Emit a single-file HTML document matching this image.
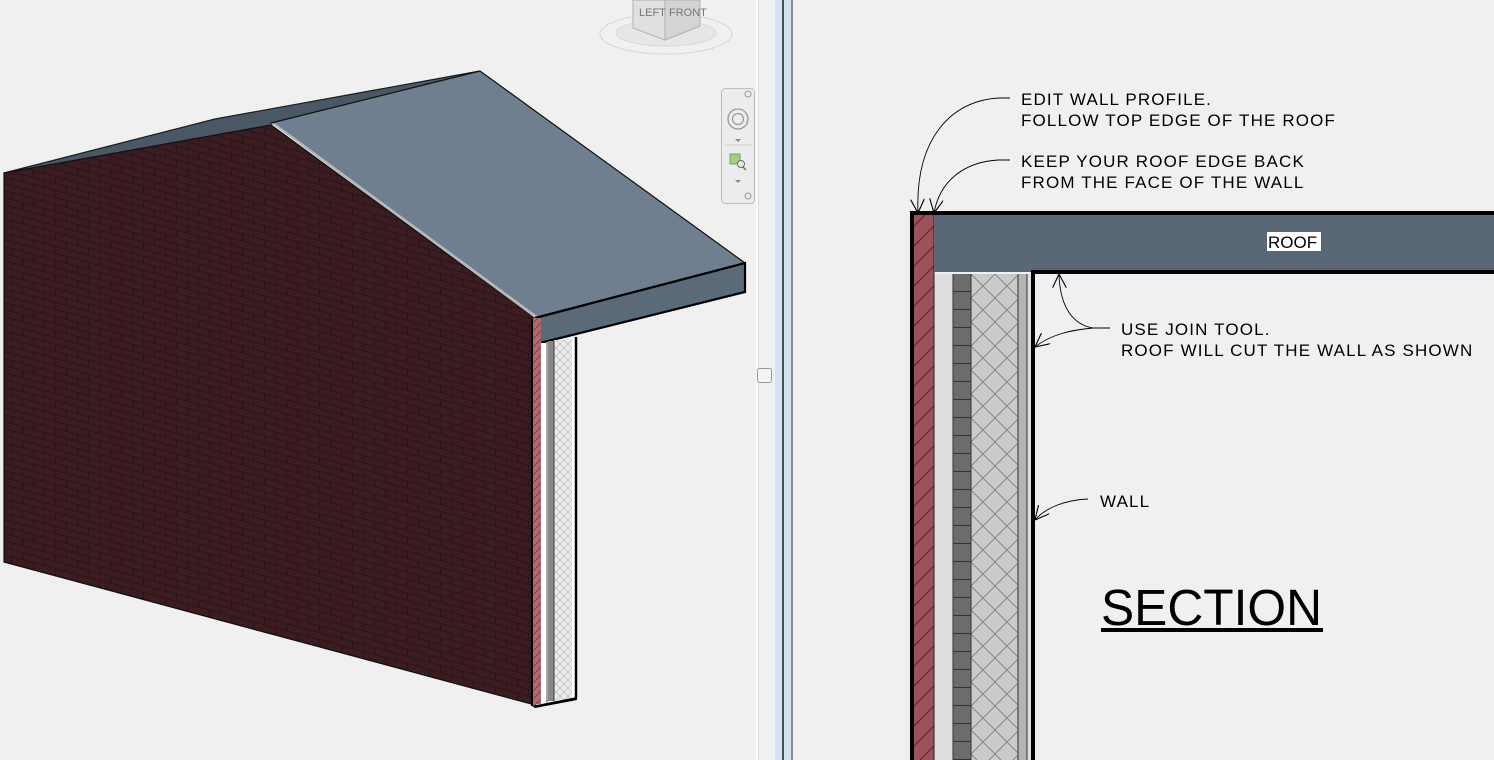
<!DOCTYPE html>
<html><head><meta charset="utf-8"><style>
html,body{margin:0;padding:0;background:#f0f0f0;width:1494px;height:760px;overflow:hidden}
svg{display:block}
text{font-family:"Liberation Sans",Arial,sans-serif}
</style></head><body>
<svg width="1494" height="760" viewBox="0 0 1494 760" xmlns="http://www.w3.org/2000/svg">
<defs>
<pattern id="brick" width="22" height="14" patternUnits="userSpaceOnUse" patternTransform="skewY(15.1)">
<rect width="22" height="14" fill="#3b1c21"/>
<path d="M0 0.5H22M0 7.5H22M0.5 0V7M11.5 7V14" stroke="#2c1316" stroke-width="1"/>
</pattern>
<pattern id="hatchR" width="20" height="20" patternUnits="userSpaceOnUse">
<rect width="20" height="20" fill="#9c525a"/>
<path d="M0 20L20 0M-5 5L5 -5M15 25L25 15" stroke="#5a1e25" stroke-width="1"/>
</pattern>
<pattern id="hatchR2" width="8" height="8" patternUnits="userSpaceOnUse">
<rect width="8" height="8" fill="#b06a70"/>
<path d="M0 8L8 0" stroke="#8a4048" stroke-width="1"/>
</pattern>
<pattern id="cross" width="24" height="24" patternUnits="userSpaceOnUse" x="971" y="274">
<rect width="24" height="24" fill="#cacaca"/>
<path d="M0 0L24 24M24 0L0 24" stroke="#7a7a7a" stroke-width="0.8"/>
</pattern>
<pattern id="cross2" width="8" height="8" patternUnits="userSpaceOnUse">
<rect width="8" height="8" fill="#ececec"/>
<path d="M0 0L8 8M8 0L0 8" stroke="#b8b8b8" stroke-width="0.7"/>
</pattern>
<pattern id="blocks" width="20" height="18" patternUnits="userSpaceOnUse" x="953" y="274">
<rect width="20" height="18" fill="#6c6c6c"/>
<path d="M0 17.5H20" stroke="#333" stroke-width="1"/>
</pattern>
<marker id="ar" viewBox="0 0 10 10" refX="10" refY="5" markerWidth="14" markerHeight="14" orient="auto-start-reverse" markerUnits="userSpaceOnUse">
<path d="M0 0L10 5L0 10" fill="none" stroke="#000" stroke-width="0.8"/>
</marker>
</defs>

<polygon points="4,173 215,119 480,71 271,125 " fill="#4a5866"/>
<polyline points="4,173 215,119 480,71" fill="none" stroke="#1a1a1a" stroke-width="1.2"/>
<polygon points="4,173 271,125 535,318 535,705 4,562" fill="url(#brick)"/>
<polygon points="4,173 271,125 535,318 535,705 4,562" fill="none" stroke="#111" stroke-width="1.2"/>
<polygon points="271,123 480,71 745,263 535,318" fill="#6f7f8f"/>
<polygon points="271,123 535,318 540,318 276,124" fill="#b8b8b8"/>
<polyline points="271,123 480,71 745,263" fill="none" stroke="#111" stroke-width="1.2"/>
<polygon points="535,318 745,263 745,292 540,343 535,343" fill="#5b6a78"/>
<polyline points="535,318 745,263 745,292 540,343" fill="none" stroke="#000" stroke-width="2.2"/>
<polygon points="532,318 541,318 541,704 532,705" fill="url(#hatchR2)"/>
<line x1="532" y1="318" x2="532" y2="706" stroke="#000" stroke-width="2"/>
<rect x="541" y="343" width="7" height="360" fill="#fff"/>
<rect x="548" y="341" width="6" height="360" fill="#888"/>
<rect x="554" y="340" width="18" height="360" fill="url(#cross2)"/>
<rect x="572" y="338" width="3" height="360" fill="#fff"/>
<line x1="576" y1="337" x2="576" y2="698" stroke="#000" stroke-width="2.5"/>
<polygon points="532,706 577,697 577,700 535,708" fill="#000"/>
<line x1="547" y1="343" x2="547" y2="703" stroke="#222" stroke-width="0.8"/>
<line x1="554" y1="341" x2="554" y2="702" stroke="#222" stroke-width="0.8"/>

<ellipse cx="666" cy="34" rx="66" ry="20" fill="none" stroke="#c8c8c8" stroke-width="1" stroke-dasharray="2 1"/>
<ellipse cx="666" cy="33" rx="50" ry="13" fill="#e6e6e6" stroke="#d6d6d6"/>
<polygon points="633,0 665,0 665,40 633,28" fill="#e0e0e0" stroke="#b0b0b0"/>
<polygon points="665,0 700,0 700,26 665,40" fill="#d4d4d4" stroke="#b0b0b0"/>
<text x="639" y="16" font-size="11" fill="#777">LEFT</text>
<text x="669" y="16" font-size="11" fill="#777">FRONT</text>

<rect x="721.5" y="88.5" width="33" height="115" rx="4" fill="#ececec" stroke="#bdbdbd"/>
<circle cx="748" cy="94" r="3" fill="none" stroke="#999"/>
<circle cx="738" cy="119" r="10" fill="none" stroke="#999" stroke-width="1.3"/>
<circle cx="738" cy="119" r="5.5" fill="none" stroke="#999" stroke-width="1.2"/>
<path d="M735 139L741 139L738 142Z" fill="#888"/>
<line x1="725" y1="145" x2="752" y2="145" stroke="#ccc"/>
<rect x="730" y="154" width="10" height="10" fill="#a6cc8a" stroke="#7aa060"/>
<circle cx="741" cy="164" r="3.5" fill="#eee" stroke="#666"/>
<line x1="743" y1="167" x2="746" y2="170" stroke="#666" stroke-width="1.3"/>
<path d="M735 180L741 180L738 183Z" fill="#888"/>
<circle cx="748" cy="196" r="3" fill="none" stroke="#999"/>

<rect x="756" y="0" width="2" height="760" fill="#fafafa"/>
<line x1="758.5" y1="0" x2="758.5" y2="760" stroke="#e0e0e0"/>
<rect x="757.5" y="368.5" width="14" height="14" rx="2" fill="#f4f4f4" stroke="#999"/>
<rect x="775" y="0" width="7" height="760" fill="#d4e3f1"/>
<rect x="782" y="0" width="2" height="760" fill="#505050"/>
<rect x="784" y="0" width="7" height="760" fill="#d4e3f1"/>
<rect x="791" y="0" width="2" height="760" fill="#8a8a8a"/>

<rect x="934" y="274" width="19" height="486" fill="#dedede"/>
<rect x="953" y="274" width="18" height="486" fill="url(#blocks)"/>
<rect x="971" y="274" width="47" height="486" fill="url(#cross)"/>
<rect x="1018" y="274" width="9" height="486" fill="#b4b4b4"/>
<rect x="1027" y="274" width="4" height="486" fill="#e0e0e0"/>
<path d="M953 274V760M971 274V760M1018 274V760M1027 274V760M934 274V760" stroke="#333" stroke-width="1"/>
<rect x="1031" y="272" width="4" height="488" fill="#000"/>
<rect x="914" y="214" width="20" height="546" fill="url(#hatchR)"/>
<line x1="934" y1="214" x2="934" y2="760" stroke="#222"/>
<rect x="934" y="214" width="560" height="58" fill="#5a6775"/>
<rect x="910" y="211" width="584" height="4" fill="#000"/>
<rect x="910" y="211" width="4" height="549" fill="#000"/>
<rect x="1031" y="270" width="463" height="4" fill="#000"/>
<rect x="1267" y="232" width="54" height="19" fill="#fff"/>
<text x="1268" y="248" font-size="17" fill="#000">ROOF</text>

<g fill="none" stroke="#000" stroke-width="0.9">
<path d="M1010 98L1000 98C950 100 915 140 918 213" marker-end="url(#ar)"/>
<path d="M1010 160L998 160C965 162 940 180 934 213" marker-end="url(#ar)"/>
<path d="M1110 328L1093 328C1075 325 1060 310 1059 274" marker-end="url(#ar)"/>
<path d="M1110 328L1093 328C1070 330 1050 335 1035 347" marker-end="url(#ar)"/>
<path d="M1088 499C1065 500 1045 508 1035 520" marker-end="url(#ar)"/>
</g>

<g font-size="17" fill="#000" letter-spacing="1.15">
<text x="1021" y="105">EDIT WALL PROFILE.</text>
<text x="1021" y="126">FOLLOW TOP EDGE OF THE ROOF</text>
<text x="1021" y="167">KEEP YOUR ROOF EDGE BACK</text>
<text x="1021" y="188">FROM THE FACE OF THE WALL</text>
<text x="1121" y="335">USE JOIN TOOL.</text>
<text x="1121" y="356">ROOF WILL CUT THE WALL AS SHOWN</text>
<text x="1100" y="507">WALL</text>
</g>
<text x="1101" y="625" font-size="51" fill="#000" textLength="221" lengthAdjust="spacingAndGlyphs">SECTION</text>
<rect x="1101" y="628" width="222" height="4" fill="#000"/>
</svg>
</body></html>
